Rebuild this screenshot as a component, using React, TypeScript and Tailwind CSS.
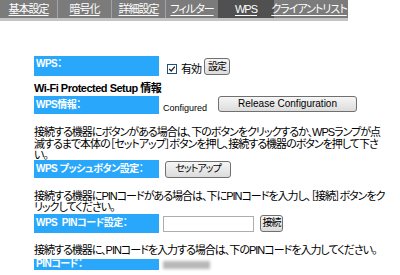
import React from "react";

const tabs = [
  { label: "基本設定", w: "w-[57px]" },
  { label: "暗号化", w: "w-[54px]" },
  { label: "詳細設定", w: "w-[54px]" },
  { label: "フィルター", w: "w-[53px]" },
  { label: "WPS", w: "w-[56px]", active: true },
  { label: "クライアントリスト", w: "w-[70px]" },
];

const Label = ({ children, className = "" }: { children: React.ReactNode; className?: string }) => (
  <div
    className={`w-[125px] shrink-0 bg-[#29a8fb] text-white font-bold text-[10px] tracking-[-0.5px] leading-[12px] pl-[2px] flex whitespace-nowrap ${className}`}
  >
    {children}
  </div>
);

const Btn = ({ children, className = "" }: { children: React.ReactNode; className?: string }) => (
  <button
    className={`border border-[#707070] rounded-[3px] bg-gradient-to-b from-[#f6f6f6] to-[#dcdcdc] text-[10px] leading-none text-black whitespace-nowrap px-0 ${className}`}
  >
    {children}
  </button>
);

export default function App() {
  return (
    <div className="w-[400px] h-[275px] overflow-hidden bg-white text-black font-['Liberation_Sans','Noto_Sans_CJK_JP',sans-serif] [font-feature-settings:'palt']">
      {/* tab bar */}
      <div className="flex w-[348px] h-[21px] bg-[#7b7b7b] border-b-[3px] border-[#c4c4c4]">
        {tabs.map((t, i) => (
          <div
            key={t.label}
            className={`${t.w} flex items-center justify-center whitespace-nowrap text-[11px] tracking-[-1px] text-white underline underline-offset-2 ${
              t.active ? "bg-[#505050]" : ""
            } ${i > 0 && !t.active && !tabs[i - 1].active ? "border-l border-[#a3a3a3]" : ""}`}
          >
            {t.label}
          </div>
        ))}
      </div>

      <div className="pl-[34px] pt-[35px] text-[11px] tracking-[-1px]">
        {/* WPS row */}
        <div className="flex h-[20px]">
          <Label className="pt-[2px]">WPS：</Label>
          <div className="flex items-center ml-[8px] mt-[5px] self-start">
            <span className="w-[10px] h-[10px] border border-[#1c5180] bg-white flex items-center justify-center">
              <svg viewBox="0 0 10 10" className="w-[8px] h-[8px]">
                <path d="M1.5 5 L4 7.5 L8.5 2" stroke="#222" strokeWidth="1.6" fill="none" />
              </svg>
            </span>
            <span className="ml-[4px]">有効</span>
          </div>
          <Btn className="ml-[3px] mt-[2px] h-[17px] w-[26px] border-[#3c7fb1] bg-gradient-to-b from-[#eaf6fd] to-[#a7d9f5]">
            設定
          </Btn>
        </div>

        <div className="font-bold text-[11px] tracking-[-0.5px] leading-[12px] mt-[6px]">Wi-Fi Protected Setup 情報</div>

        {/* WPS info */}
        <div className="flex h-[18px] mt-[2px]">
          <Label className="items-center">WPS情報：</Label>
          <span className="ml-[4px] mt-[6px] text-[9px] tracking-normal">Configured</span>
          <Btn className="ml-[11px] w-[139px] h-[16px] text-[10.5px] tracking-normal">Release Configuration</Btn>
        </div>

        <p className="mt-[13px] leading-[11.5px] whitespace-nowrap">
          接続する機器にボタンがある場合は、下のボタンをクリックするか、WPSランプが点
          <br />
          滅するまで本体の［セットアップ］ボタンを押し、接続する機器のボタンを押して下さ
          <br />
          い。
        </p>

        <div className="flex h-[18px] mt-[-2px]">
          <Label className="items-center">WPS プッシュボタン設定：</Label>
          <Btn className="ml-[6px] mt-[1px] w-[66px] h-[17px]">セットアップ</Btn>
        </div>

        <p className="mt-[13px] leading-[11.5px] whitespace-nowrap">
          接続する機器にPINコードがある場合は、下にPINコードを入力し、［接続］ボタンをク
          <br />
          リックしてください。
        </p>

        <div className="flex h-[19px]">
          <Label className="items-center">WPS&nbsp;&nbsp;PINコード設定：</Label>
          <div className="ml-[4px] mt-[2px] w-[91px] h-[16px] border border-[#abadb3] bg-white" />
          <Btn className="ml-[6px] mt-[1px] w-[23px] h-[17px]">接続</Btn>
        </div>

        <p className="mt-[12px] leading-[11.5px] whitespace-nowrap">
          接続する機器に、PINコードを入力する場合は、下のPINコードを入力してください。
        </p>

        <div className="flex h-[11px] mt-[2.5px]">
          <Label className="items-center">PINコード：</Label>
          <div className="ml-[4px] mt-[2px] w-[47px] h-[8px] bg-[#b8b8b8] blur-[1.5px]" />
        </div>
      </div>
    </div>
  );
}
